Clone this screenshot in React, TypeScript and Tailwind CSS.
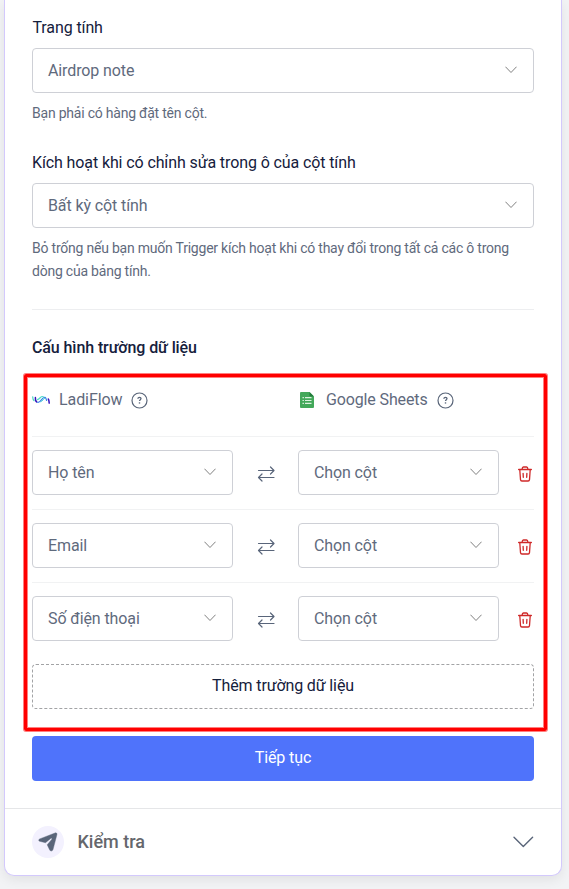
import React from "react";

function Chevron({ className }: { className: string }) {
  return (
    <svg className={className} viewBox="0 0 12 8" fill="none" stroke="currentColor" strokeLinecap="round" strokeLinejoin="round">
      <path d="M.7 1 6 6.500 11.300 1" />
    </svg>
  );
}

function Select({ value, className = "" }: { value: string; className?: string }) {
  return (
    <button className={`flex h-[45px] items-center justify-between rounded border border-[#ced0d6] bg-white pr-[16px] pl-[15px] text-left tracking-[-0.11px] text-[#5f6a7d] ${className}`}>
      <span>{value}</span>
      <Chevron className="mr-[0.5px] mb-[2px] h-2 w-3 text-[#808080]" />
    </button>
  );
}

function Help() {
  return (
    <svg className="ml-[9px] h-[17px] w-[17px] text-[#596579]" viewBox="0 0 17 17" fill="none" stroke="currentColor">
      <circle cx="8.500" cy="8.500" r="7.500" strokeWidth="1.200" />
      <path d="M6.900 6.800c0-1 .7-1.500 1.600-1.500s1.500.5 1.500 1.300c0 1.100-1.500 1.200-1.500 2.500" strokeWidth="1.300" />
      <path d="M8.500 10.300v1.300" strokeWidth="1.400" />
    </svg>
  );
}

function FlowLogo() {
  return (
    <svg className="h-[10px] w-[18px]" viewBox="0 0 18 10" fill="none" strokeLinecap="round">
      <path d="M.7 1.800C.8 4.500 1.300 5.300 2.100 5.700" stroke="#45d6bd" strokeWidth="1.200" />
      <path d="M3.400 2.600C3.300 5 3.900 6.600 4.800 7" stroke="#3510bd" strokeWidth="1.500" />
      <path d="M5.800 7.400C8.400 8 10 2.400 12.400 2.300" stroke="#3185e8" strokeWidth="1.200" />
      <path d="M5.400 4.700C7.500 4.300 8.200 1.800 10 1.500c1-.1 1.500.4 1.500.4" stroke="#54ddc9" strokeWidth="1.200" />
      <path d="M8.700 6.800c2.200-.6 2.600-3.500 4.700-3.800" stroke="#49cbd9" strokeWidth="1" />
      <path d="M13 2.300c1.200.5 1.200 1.900 1.600 3.200" stroke="#3485e4" strokeWidth="1.200" />
      <path d="M16.300 4.100c.8.800.7 2.600.9 4" stroke="#3510bd" strokeWidth="1.500" />
    </svg>
  );
}

function SheetsLogo() {
  return (
    <svg className="ml-[2px] h-[16px] w-[14px]" viewBox="0 0 14 16">
      <path d="M1.300 0h8.200L14 4.400v10.300c0 .8-.5 1.300-1.300 1.300H1.300C.5 16 0 15.500 0 14.700V1.300C0 .5.5 0 1.300 0Z" fill="#43a85a" />
      <path d="M9.500 0 14 4.400h-3.300c-.8 0-1.200-.5-1.200-1.200Z" fill="#237c3c" />
      <path d="M2.500 5.700h1.400M5 5.700h6.500M2.500 8.500h1.400M5 8.500h6.500M2.500 11.300h1.400M5 11.300h6.500" stroke="#dcf1df" strokeWidth="1.200" />
    </svg>
  );
}

function Swap() {
  return (
    <svg className="mt-[3px] h-4 w-[18px] text-[#59657a]" viewBox="0 0 18 16" fill="none" stroke="currentColor" strokeWidth="1.200" strokeLinecap="round" strokeLinejoin="round">
      <path d="M1.500 4.500H17M13.500 1 17 4.500 13.500 8M17 11.500H1.500M5 8l-3.500 3.500L5 15" />
    </svg>
  );
}

function Trash() {
  return (
    <svg className="mt-[3px] h-4 w-[14px] text-[#cf2929]" viewBox="0 0 14 16" fill="none" stroke="currentColor" strokeWidth="1.300" strokeLinecap="round" strokeLinejoin="round">
      <path d="M.6 3.500h12.800M4 3.300c.2-1.500.7-2.300 1.400-2.300h3.200c.7 0 1.200.8 1.400 2.300M1.800 4l.7 9.600c.1 1 .5 1.400 1.400 1.400h6.200c.9 0 1.300-.4 1.400-1.400l.7-9.600M5.100 7.300l.2 4M8.900 7.300l-.2 4" />
    </svg>
  );
}

const fields = ["Họ tên", "Email", "Số điện thoại"];

export default function App() {
  return (
    <div className="h-[889px] w-[569px] overflow-hidden bg-[#f2f3f5] pl-1 font-['Roboto',sans-serif] text-base leading-6 text-[#15203c]">
      <main className="h-[876px] w-[558px] rounded-b-[10px] border border-t-0 border-[#d3c9fc] bg-white shadow-[0_4px_12px_rgba(0,0,0,0.07)]">
        <div className="flex h-[808px] flex-col px-[27px] pt-[16px]">
          <label className="mb-[8px] pl-[0.5px] tracking-[-0.11px]">Trang tính</label>
          <Select value="Airdrop note" />
          <p className="mt-[9px] text-sm leading-[23px] tracking-[-0.22px] text-[#5f6a7d]">Bạn phải có hàng đặt tên cột.</p>
          <label className="mt-[26px] mb-[8px] tracking-[-0.11px]">Kích hoạt khi có chỉnh sửa trong ô của cột tính</label>
          <Select value="Bất kỳ cột tính" />
          <p className="mt-[9px] text-sm leading-[23px] tracking-[-0.22px] text-[#5f6a7d]">
            Bỏ trống nếu bạn muốn Trigger kích hoạt khi có thay đổi trong tất cả các ô trong<br />dòng của bảng tính.
          </p>
          <hr className="mt-[26px] border-[#edeef0]" />
          <h2 className="mt-[26px] font-medium tracking-[-0.1px]">Cấu hình trường dữ liệu</h2>
          <section className="relative mt-[15px]">
            <div className="flex h-[62px] items-center border-b border-[#f1f2f3] pt-px pb-[12px] text-[#5f6a7d]">
              <div className="flex w-[266px] items-center tracking-[-0.08px]">
                <FlowLogo />
                <span className="ml-[9px]">LadiFlow</span>
                <Help />
              </div>
              <div className="flex items-center tracking-[-0.13px]">
                <SheetsLogo />
                <span className="ml-[12px]">Google Sheets</span>
                <Help />
              </div>
            </div>
            {fields.map((field, index) => (
              <div key={field} className={`flex h-[73px] items-center pb-px ${index < 2 ? "border-b border-[#f1f2f3]" : "border-b border-transparent"}`}>
                <Select value={field} className="w-[201px]" />
                <div className="flex w-[65px] justify-center"><Swap /></div>
                <Select value="Chọn cột" className="w-[201px]" />
                <div className="ml-[19px]"><Trash /></div>
              </div>
            ))}
            <button className="mt-[8px] flex h-[45px] w-full items-center justify-center rounded border border-dashed border-[#a2a3a5] pb-px tracking-[-0.13px]">Thêm trường dữ liệu</button>
            <div className="pointer-events-none absolute -top-px -right-[13px] -bottom-[22px] -left-[8px] rounded-[2px] border-[3px] border-[#ff0000] shadow-[0_0_0_1px_rgba(255,0,0,0.5),inset_0_0_0_1px_rgba(255,0,0,0.5)]" />
          </section>
          <button className="mt-[27px] flex h-[45px] shrink-0 items-center justify-center rounded bg-[#4f73fb] pb-[2px] tracking-[-0.1px] text-white">Tiếp tục</button>
        </div>
        <footer className="flex h-[67px] items-center border-t border-[#e5e6e8] px-[27px]">
          <div className="flex h-8 w-8 items-center justify-center rounded-full bg-[#f3f1fe]">
            <svg className="h-[20px] w-[20px]" viewBox="0 0 20 20">
              <path d="M1.700 6.900 17 1c1.400-.5 2.300.4 1.900 1.800L15 17.600c-.5 1.700-2.500 2-3.300.4L9.200 12.800l4.500-5.400c.7-.9-.2-1.600-1-.9L7.500 10.700 1.700 9.300C.4 8.900.4 7.400 1.700 6.900Z" fill="#596579" stroke="#596579" strokeWidth=".4" strokeLinejoin="round" />
            </svg>
          </div>
          <h2 className="ml-[13.500px] text-lg font-medium text-[#65676c]">Kiểm tra</h2>
          <svg className="ml-auto h-[12px] w-[21px] text-[#596579]" viewBox="0 0 21 12" fill="none" stroke="currentColor" strokeWidth="1.400" strokeLinecap="round" strokeLinejoin="round">
            <path d="M1 1.200 10.300 10.500 19.600 1.200" />
          </svg>
        </footer>
      </main>
    </div>
  );
}
